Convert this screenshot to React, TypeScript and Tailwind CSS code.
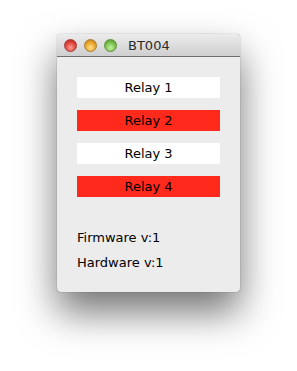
export default function App() {
  const relays = [
    { name: "Relay 1", on: false },
    { name: "Relay 2", on: true },
    { name: "Relay 3", on: false },
    { name: "Relay 4", on: true },
  ]

  return (
    <div className="w-[297px] h-[371px] bg-white pt-[34px] pl-[57px] font-['DejaVu_Sans',sans-serif]">
      <div className="w-[183px] h-[258px] bg-[#ececec] rounded-[4px] shadow-[0_20px_38px_rgba(0,0,0,0.55),0_0_1px_rgba(0,0,0,0.6)] flex flex-col">
        {/* Title bar */}
        <div className="h-[23px] rounded-t-[4px] bg-gradient-to-b from-[#ececec] to-[#cfcfcf] border-b border-[#6e6e6e] flex items-center pl-[7px]">
          <span className="w-[13px] h-[13px] rounded-full bg-[radial-gradient(circle_at_50%_70%,#ff9c94,#e0443a_55%,#a8221c)] border border-[#a23a33]" />
          <span className="w-[13px] h-[13px] rounded-full ml-[7px] bg-[radial-gradient(circle_at_50%_70%,#ffe08a,#e9a52a_55%,#b9771a)] border border-[#a97a2a]" />
          <span className="w-[13px] h-[13px] rounded-full ml-[7px] bg-[radial-gradient(circle_at_50%_70%,#c6f0a0,#79c04a_55%,#4e8d2c)] border border-[#5c8f3a]" />
          <span className="ml-[11px] text-[13px] text-[#2b2b2b] leading-none">BT004</span>
        </div>

        {/* Relays */}
        <div className="px-[20px] pt-[20px] flex flex-col gap-[12px]">
          {relays.map((r) => (
            <div
              key={r.name}
              className={`h-[21px] flex items-center justify-center text-[13px] text-black ${
                r.on ? "bg-[#ff2a1c]" : "bg-white"
              }`}
            >
              {r.name}
            </div>
          ))}
        </div>

        {/* Versions */}
        <div className="px-[20px] pt-[33px] flex flex-col gap-[9px] text-[13px] text-black">
          <div className="h-[16px] leading-[16px]">Firmware v:1</div>
          <div className="h-[16px] leading-[16px]">Hardware v:1</div>
        </div>
      </div>
    </div>
  )
}
